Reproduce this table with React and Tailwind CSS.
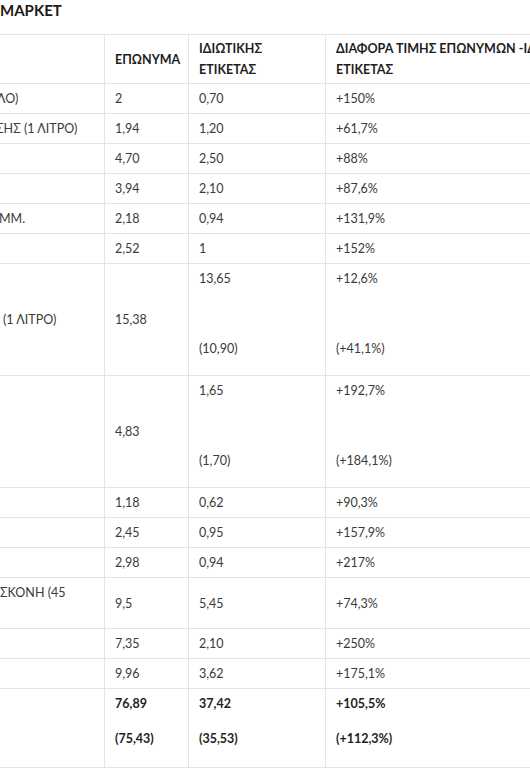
import React from "react";

const rows = [
  { c1: "ΛΟ)", c1ml: "-ml-[3px]", c2: ["2"], c3: ["0,70"], c4: ["+150%"] },
  { c1: "ΣΗΣ (1 ΛΙΤΡΟ)", c1ml: "-ml-[4px]", c2: ["1,94"], c3: ["1,20"], c4: ["+61,7%"] },
  { c1: "", c2: ["4,70"], c3: ["2,50"], c4: ["+88%"] },
  { c1: "", c2: ["3,94"], c3: ["2,10"], c4: ["+87,6%"] },
  { c1: "ΜΜ.", c1ml: "-ml-[1px]", c2: ["2,18"], c3: ["0,94"], c4: ["+131,9%"] },
  { c1: "", c2: ["2,52"], c3: ["1"], c4: ["+152%"] },
  { c1: "(1 ΛΙΤΡΟ)", c1ml: "ml-[3px]", c2: ["15,38"], c3: ["13,65", "\u00a0", "(10,90)"], c4: ["+12,6%", "\u00a0", "(+41,1%)"] },
  { c1: "", c2: ["4,83"], c3: ["1,65", "\u00a0", "(1,70)"], c4: ["+192,7%", "\u00a0", "(+184,1%)"] },
  { c1: "", c2: ["1,18"], c3: ["0,62"], c4: ["+90,3%"] },
  { c1: "", c2: ["2,45"], c3: ["0,95"], c4: ["+157,9%"] },
  { c1: "", c2: ["2,98"], c3: ["0,94"], c4: ["+217%"] },
  { c1: "ΣΚΟΝΗ (45", c1ml: "ml-0", c1two: true, c2: ["9,5"], c3: ["5,45"], c4: ["+74,3%"] },
  { c1: "", c2: ["7,35"], c3: ["2,10"], c4: ["+250%"] },
  { c1: "", c2: ["9,96"], c3: ["3,62"], c4: ["+175,1%"] },
  { c1: "", bold: true, c2: ["76,89", "(75,43)"], c3: ["37,42", "(35,53)"], c4: ["+105,5%", "(+112,3%)"] },
];

function Cell({ lines, bold }) {
  const multi = lines.length > 1;
  return (
    <td className={`border border-[#e4e4e4] pl-[10px] pr-[6px] py-[4px] align-middle whitespace-nowrap ${bold ? "font-bold text-[#1e1e1e]" : "text-[#3a3a3a]"}`}>
      {multi ? (
        lines.map((l, i) => (
          <p key={i} className={i === lines.length - 1 ? (lines.length === 2 ? "mb-[14px]" : "mb-[12px]") : "mb-[14px]"}>{l}</p>
        ))
      ) : (
        <span>{lines[0]}</span>
      )}
    </td>
  );
}

export default function App() {
  return (
    <div
      className="w-[530px] h-[776px] overflow-hidden bg-white"
      style={{ fontFamily: "Lato, 'Open Sans', 'Liberation Sans', sans-serif" }}
    >
      <div className="h-[34px] pt-[1px] text-[15px] leading-[18px] font-bold text-[#1a1a1a]">ΜΑΡΚΕΤ</div>
      <table className="table-fixed border-collapse w-[640px] -ml-[1px] text-[12.5px] leading-[21px]">
        <colgroup>
          <col className="w-[105px]" />
          <col className="w-[84px]" />
          <col className="w-[137px]" />
          <col className="w-[314px]" />
        </colgroup>
        <thead>
          <tr className="font-bold text-[#1e1e1e]">
            <th className="border border-[#e4e4e4] py-[3px]"></th>
            <th className="border border-[#e4e4e4] pl-[10px] py-[3px] text-left align-middle font-bold whitespace-nowrap">ΕΠΩΝΥΜΑ</th>
            <th className="border border-[#e4e4e4] pl-[10px] py-[3px] text-left align-middle font-bold whitespace-nowrap">
              ΙΔΙΩΤΙΚΗΣ<br />ΕΤΙΚΕΤΑΣ
            </th>
            <th className="border border-[#e4e4e4] pl-[10px] py-[3px] text-left align-middle font-bold whitespace-nowrap">
              ΔΙΑΦΟΡΑ ΤΙΜΗΣ ΕΠΩΝΥΜΩΝ -ΙΔΙΩΤΙΚΗΣ<br />ΕΤΙΚΕΤΑΣ
            </th>
          </tr>
        </thead>
        <tbody>
          {rows.map((r, i) => (
            <tr key={i}>
              <td className="border border-[#e4e4e4] py-[4px] align-middle whitespace-nowrap overflow-hidden text-[#3a3a3a]">
                <div className={r.c1ml || ""}>
                  {r.c1 || "\u00a0"}
                  {r.c1two ? (<><br />{"\u00a0"}</>) : null}
                </div>
              </td>
              <Cell lines={r.c2} bold={r.bold} />
              <Cell lines={r.c3} bold={r.bold} />
              <Cell lines={r.c4} bold={r.bold} />
            </tr>
          ))}
        </tbody>
      </table>
    </div>
  );
}
